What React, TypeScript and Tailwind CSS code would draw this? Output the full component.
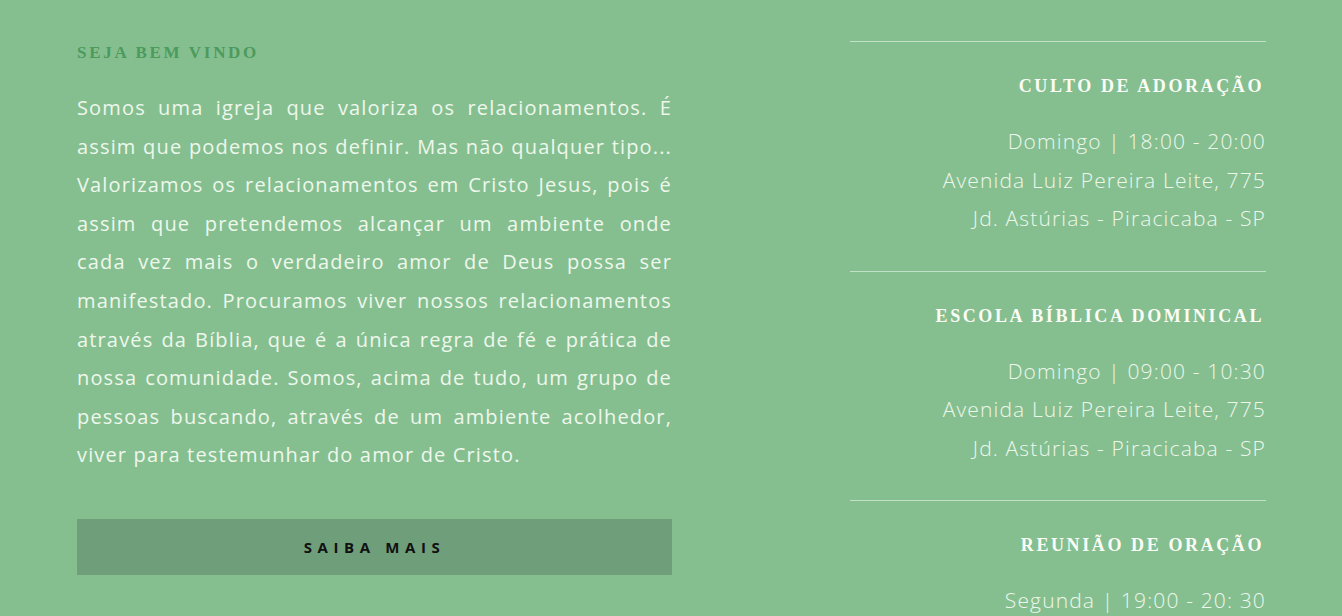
import React from "react";

const lines = [
  "Somos uma igreja que valoriza os relacionamentos. É",
  "assim que podemos nos definir. Mas não qualquer tipo...",
  "Valorizamos os relacionamentos em Cristo Jesus, pois é",
  "assim que pretendemos alcançar um ambiente onde",
  "cada vez mais o verdadeiro amor de Deus possa ser",
  "manifestado. Procuramos viver nossos relacionamentos",
  "através da Bíblia, que é a única regra de fé e prática de",
  "nossa comunidade. Somos, acima de tudo, um grupo de",
  "pessoas buscando, através de um ambiente acolhedor,",
];

const events = [
  {
    title: "CULTO DE ADORAÇÃO",
    lines: ["Domingo | 18:00 - 20:00", "Avenida Luiz Pereira Leite, 775", "Jd. Astúrias - Piracicaba - SP"],
  },
  {
    title: "ESCOLA BÍBLICA DOMINICAL",
    lines: ["Domingo | 09:00 - 10:30", "Avenida Luiz Pereira Leite, 775", "Jd. Astúrias - Piracicaba - SP"],
  },
  {
    title: "REUNIÃO DE ORAÇÃO",
    lines: ["Segunda | 19:00 - 20: 30", "Avenida Luiz Pereira Leite, 775", "Jd. Astúrias - Piracicaba - SP"],
  },
];

export default function App() {
  return (
    <div className="w-[1342px] h-[616px] overflow-hidden bg-[#85bf90] flex pt-[41px] pl-[77px] font-['Open_Sans',sans-serif]">
      <div className="w-[595px] flex flex-col">
        <h3 className="h-[24px] leading-[24px] text-[17px] font-bold tracking-[2.7px] text-[#4c9a5c] font-['Liberation_Serif',serif]">
          SEJA BEM VINDO
        </h3>
        <div className="mt-[24px] text-[20px] font-medium leading-[38.6px] tracking-[1.15px] text-[#eef7ec]">
          {lines.map((l, i) => (
            <div key={i} className="whitespace-nowrap text-justify [text-align-last:justify]">
              {l}
            </div>
          ))}
          <div className="whitespace-nowrap">viver para testemunhar do amor de Cristo.</div>
        </div>
        <button className="mt-[44px] h-[56px] w-full bg-[#6f9e7a] text-[15px] font-bold tracking-[5.6px] text-[#111] font-['Open_Sans',sans-serif]">
          SAIBA MAIS
        </button>
      </div>
      <div className="ml-[178px] w-[416px] flex flex-col">
        {events.map((e, i) => (
          <div key={i} className="border-t border-[#c2e0c6] pt-[32px] pb-[33px] text-right">
            <h4 className="h-[24px] leading-[24px] text-[18px] font-bold tracking-[2.6px] text-[#fbfcf6] font-['Liberation_Serif',serif] pr-[2px]">
              {e.title}
            </h4>
            <div className="mt-[24px] text-[21px] font-light leading-[38.5px] tracking-[1.15px] text-[#eef7ec]">
              {e.lines.map((l, j) => (
                <div key={j}>{l}</div>
              ))}
            </div>
          </div>
        ))}
      </div>
    </div>
  );
}
